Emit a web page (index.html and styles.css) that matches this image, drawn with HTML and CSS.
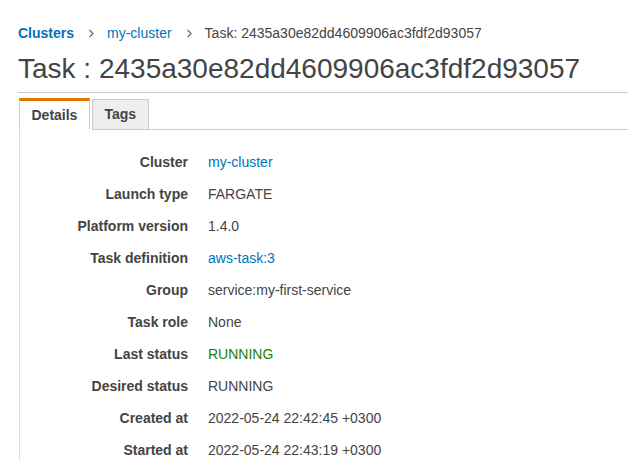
FILE: index.html
```html
<!DOCTYPE html>
<html>
<head>
<meta charset="utf-8">
<link rel="stylesheet" href="styles.css">
</head>
<body>
<div class="page">
  <nav class="crumbs">
    <a class="crumb crumb-root">Clusters</a>
    <svg class="sep" width="7" height="9" viewBox="0 0 7 9"><path d="M1.5 1 L5 4.5 L1.5 8" fill="none" stroke="#687078" stroke-width="1.3"/></svg>
    <a class="crumb">my-cluster</a>
    <svg class="sep" width="7" height="9" viewBox="0 0 7 9"><path d="M1.5 1 L5 4.5 L1.5 8" fill="none" stroke="#687078" stroke-width="1.3"/></svg>
    <span class="crumb-current">Task: 2435a30e82dd4609906ac3fdf2d93057</span>
  </nav>
  <h1 class="title">Task : 2435a30e82dd4609906ac3fdf2d93057</h1>
  <div class="tabs">
    <div class="tab tab-active">Details</div>
    <div class="tab">Tags</div>
    <div class="tab-fill"></div>
  </div>
  <div class="panel">
    <dl class="details">
      <dt>Cluster</dt><dd><a class="link">my-cluster</a></dd>
      <dt>Launch type</dt><dd>FARGATE</dd>
      <dt>Platform version</dt><dd>1.4.0</dd>
      <dt>Task definition</dt><dd><a class="link">aws-task:3</a></dd>
      <dt>Group</dt><dd>service:my-first-service</dd>
      <dt>Task role</dt><dd>None</dd>
      <dt>Last status</dt><dd class="ok">RUNNING</dd>
      <dt>Desired status</dt><dd>RUNNING</dd>
      <dt>Created at</dt><dd>2022-05-24 22:42:45 +0300</dd>
      <dt>Started at</dt><dd>2022-05-24 22:43:19 +0300</dd>
    </dl>
  </div>
</div>
</body>
</html>
```

FILE: styles.css
```css
html, body {
  margin: 0;
  padding: 0;
  background: #fff;
}
body {
  font-family: "Liberation Sans", Arial, sans-serif;
  font-size: 14px;
  color: #444;
}
.page {
  padding: 23px 0 0 18px;
}
.crumbs {
  display: flex;
  align-items: center;
  height: 20px;
  line-height: 20px;
}
.crumb {
  color: #0073bb;
}
.crumb-root {
  font-weight: bold;
}
.sep {
  margin: 0 12px 0 14px;
}
.crumb-current {
  color: #444;
}
.title {
  margin: 9px 0 0 0;
  font-size: 28px;
  font-weight: normal;
  line-height: 34px;
  color: #444;
  padding-bottom: 6px;
  border-bottom: 1px solid #ccc;
}
.tabs {
  display: flex;
  align-items: flex-end;
  margin-top: 5px;
  padding-left: 1px;
}
.tab {
  box-sizing: border-box;
  height: 31px;
  line-height: 29px;
  padding: 0 11.5px;
  font-weight: bold;
  background: #eee;
  border: 1px solid #ccc;
  border-bottom: 1px solid #ccc;
  margin-left: 2px;
}
.tab-active {
  margin-left: 0;
  height: 32px;
  background: #fff;
  border-top: 3px solid #e07700;
  border-bottom: 1px solid #fff;
  line-height: 28px;
}
.tab-fill {
  flex: 1;
  border-bottom: 1px solid #ccc;
}
.panel {
  margin-left: 1px;
  border-left: 1px solid #ddd;
  padding-top: 16px;
}
.details {
  display: grid;
  grid-template-columns: 168px auto;
  column-gap: 20px;
  margin: 0;
}
.details dt {
  text-align: right;
  font-weight: bold;
  line-height: 32px;
}
.details dd {
  margin: 0;
  line-height: 32px;
}
.link {
  color: #0073bb;
}
.ok {
  color: #1d8102;
}
```
